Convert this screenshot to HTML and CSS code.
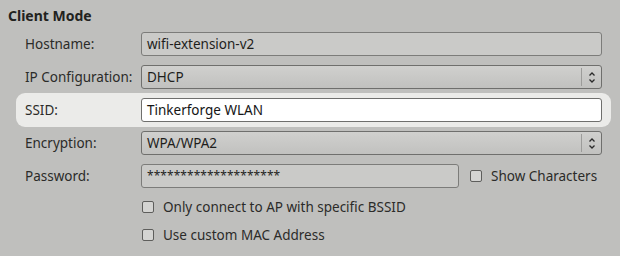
FILE: index.html
```html
<!DOCTYPE html>
<html lang="en">
<head>
    <meta charset="UTF-8">
    <title>Client Mode</title>
    <link rel="stylesheet" href="styles.css">
</head>
<body>
    <div class="panel">
        <h1>Client Mode</h1>
        <div class="rows">
            <div class="row">
                <label>Hostname:</label>
                <div class="field disabled">wifi-extension-v2</div>
            </div>
            <div class="row">
                <label>IP Configuration:</label>
                <div class="field combo">
                    <span>DHCP</span>
                    <span class="arrow"><svg width="6" height="11" viewBox="0 0 6 11"><path d="M0.5 3.5 L3 1 L5.5 3.5 M0.5 7.5 L3 10 L5.5 7.5" fill="none" stroke="#2a2a2a" stroke-width="1.3"/></svg></span>
                </div>
            </div>
            <div class="row active">
                <label>SSID:</label>
                <div class="field edit">Tinkerforge WLAN</div>
            </div>
            <div class="row">
                <label>Encryption:</label>
                <div class="field combo">
                    <span>WPA/WPA2</span>
                    <span class="arrow"><svg width="6" height="11" viewBox="0 0 6 11"><path d="M0.5 3.5 L3 1 L5.5 3.5 M0.5 7.5 L3 10 L5.5 7.5" fill="none" stroke="#2a2a2a" stroke-width="1.3"/></svg></span>
                </div>
            </div>
            <div class="row">
                <label>Password:</label>
                <div class="field disabled pass">********************</div>
                <div class="check show"><span class="box"></span>Show Characters</div>
            </div>
        </div>
        <div class="checks">
            <div class="check"><span class="box"></span>Only connect to AP with specific BSSID</div>
            <div class="check"><span class="box"></span>Use custom MAC Address</div>
        </div>
    </div>
</body>
</html>
```

FILE: styles.css
```css
body {
    margin: 0;
    background: #bfbfbd;
    font-family: 'Noto Sans', sans-serif;
    font-size: 13.5px;
    color: #2b2b29;
}
.panel {
    width: 620px;
    height: 256px;
    padding-top: 6px;
    box-sizing: border-box;
}
h1 {
    margin: 0 0 0 8px;
    font-size: 14px;
    font-weight: bold;
    line-height: 20px;
    color: #222220;
}
.rows {
    display: flex;
    flex-direction: column;
    gap: 9px;
    margin: 6px 0 0 16px;
    width: 595px;
}
.row {
    display: flex;
    align-items: center;
    height: 24px;
    padding: 0 9px;
}
.row.active {
    background: #ebebe9;
    border-radius: 9px;
    margin: -5px 0;
    padding: 5px 9px;
}
.row label {
    width: 116px;
    flex-shrink: 0;
}
.field {
    flex: 1;
    height: 24px;
    box-sizing: border-box;
    border: 1px solid #6f6f6d;
    border-radius: 3px;
    padding: 0 5px;
    line-height: 22px;
    color: #1e1e1c;
    display: flex;
    align-items: center;
}
.field.disabled {
    background: #cacac8;
    border-color: #7c7c7a;
}
.field.edit {
    background: #ffffff;
    color: #151515;
}
.field.combo {
    background: linear-gradient(#d0d0ce, #c1c1bf);
    justify-content: space-between;
    padding-right: 0;
}
.field.pass {
    flex: 0 0 318px;
    font-size: 12px;
    letter-spacing: 0.05px;
}
.arrow {
    height: 18px;
    width: 19px;
    border-left: 1px solid #9c9c9a;
    display: flex;
    align-items: center;
    justify-content: center;
}
.check {
    display: flex;
    align-items: center;
    height: 20px;
}
.box {
    width: 10px;
    height: 10px;
    border: 1px solid #5e5e5c;
    border-radius: 2px;
    background: #d4d4d2;
    margin-right: 9px;
}
.check.show {
    margin-left: 11px;
}
.checks {
    margin: 9px 0 0 142px;
    display: flex;
    flex-direction: column;
    gap: 8px;
}
```
